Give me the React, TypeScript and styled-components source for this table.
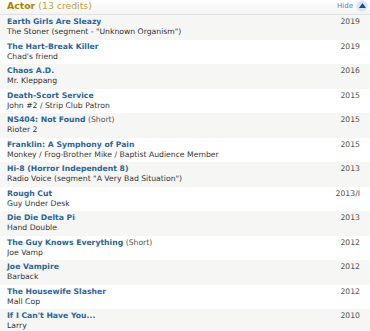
import React from 'react';
import styled, { createGlobalStyle } from 'styled-components';

const CREDITS = [
  { title: 'Earth Girls Are Sleazy', role: 'The Stoner (segment - "Unknown Organism")', year: '2019' },
  { title: 'The Hart-Break Killer', role: "Chad's friend", year: '2019' },
  { title: 'Chaos A.D.', role: 'Mr. Kleppang', year: '2016' },
  { title: 'Death-Scort Service', role: 'John #2 / Strip Club Patron', year: '2015' },
  { title: 'NS404: Not Found', kind: '(Short)', role: 'Rioter 2', year: '2015' },
  { title: 'Franklin: A Symphony of Pain', role: 'Monkey / Frog-Brother Mike / Baptist Audience Member', year: '2015' },
  { title: 'Hi-8 (Horror Independent 8)', role: 'Radio Voice (segment "A Very Bad Situation")', year: '2013' },
  { title: 'Rough Cut', role: 'Guy Under Desk', year: '2013/I' },
  { title: 'Die Die Delta Pi', role: 'Hand Double', year: '2013' },
  { title: 'The Guy Knows Everything', kind: '(Short)', role: 'Joe Vamp', year: '2012' },
  { title: 'Joe Vampire', role: 'Barback', year: '2012' },
  { title: 'The Housewife Slasher', role: 'Mall Cop', year: '2012' },
  { title: "If I Can't Have You...", role: 'Larry', year: '2010' },
];

const GlobalStyle = createGlobalStyle`
  body {
    margin: 0;
    background: #fff;
    font-family: "DejaVu Sans", Verdana, sans-serif;
  }
`;

export default function App() {
  return (
    <>
      <GlobalStyle />
      <Filmography>
        <Header>
          <Heading>
            Actor <Count>(13 credits)</Count>
          </Heading>
          <HideLink>
            Hide
            <HideIcon>
              <svg width="7" height="5" viewBox="0 0 7 5">
                <path d="M0 5 L3.5 0 L7 5 Z" fill="#1c4f80" />
              </svg>
            </HideIcon>
          </HideLink>
        </Header>
        {CREDITS.map((credit, idx) => (
          <Row key={idx} $odd={idx % 2 === 0}>
            <TitleLine>
              <Title>{credit.title}</Title>
              {credit.kind && <Kind> {credit.kind}</Kind>}
              <Year>{credit.year}</Year>
            </TitleLine>
            <Role>{credit.role}</Role>
          </Row>
        ))}
      </Filmography>
    </>
  );
}

const Filmography = styled.div`
  width: 370px;
  overflow: hidden;
`;

const Header = styled.div`
  display: flex;
  align-items: center;
  justify-content: space-between;
  height: 14px;
  padding: 0 2px 0 7px;
  background: linear-gradient(#ffffff, #f4f4f4);
  border-bottom: 1px solid #e2e2e2;
`;

const Heading = styled.div`
  font-size: 9.3px;
  font-weight: bold;
  color: #a58500;
  line-height: 12px;
  margin-top: -2px;
`;

const Count = styled.span`
  font-weight: normal;
  color: #c0a247;
`;

const HideLink = styled.div`
  display: flex;
  align-items: center;
  gap: 3px;
  font-size: 7px;
  color: #4a84b6;
  margin-top: -3px;
`;

const HideIcon = styled.span`
  display: flex;
  align-items: center;
  justify-content: center;
  width: 12px;
  height: 12px;
  border-radius: 50%;
  background: #d9e6f2;
  border: 1px solid #e6eef6;
  box-sizing: border-box;
`;

const Row = styled.div<{ $odd: boolean }>`
  box-sizing: border-box;
  height: 24.5px;
  padding: 2px 10px 0 7px;
  background: ${(p) => (p.$odd ? '#f6f6f5' : '#ffffff')};
  font-size: 7.7px;
  line-height: 10px;
`;

const TitleLine = styled.div`
  display: flex;
  align-items: baseline;
  white-space: nowrap;
`;

const Title = styled.span`
  font-weight: bold;
  color: #2b6595;
`;

const Kind = styled.span`
  color: #555;
  white-space: pre;
`;

const Year = styled.span`
  margin-left: auto;
  color: #555;
`;

const Role = styled.div`
  color: #333;
  white-space: nowrap;
`;
